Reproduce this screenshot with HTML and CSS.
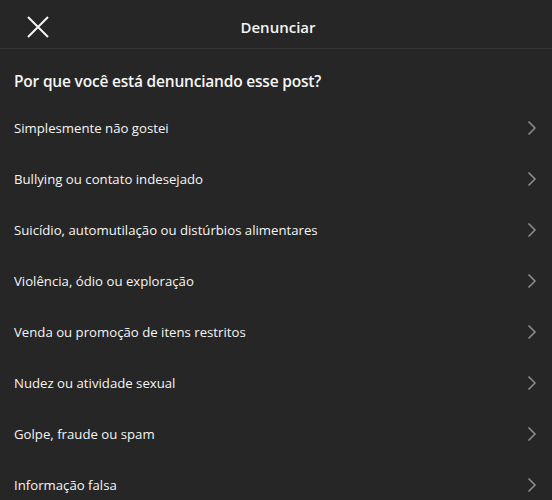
FILE: index.html
```html
<!DOCTYPE html>
<html lang="pt-BR">

<head>
    <meta charset="UTF-8">
    <meta name="viewport" content="width=device-width, initial-scale=1.0">
    <title>Denunciar</title>
    <link rel="stylesheet" href="styles.css">
</head>

<body>
    <div class="dialog">
        <header class="dialog-header">
            <button class="close-btn" aria-label="Fechar">
                <svg width="22" height="22" viewBox="0 0 22 22">
                    <path d="M1 1 L21 21 M21 1 L1 21" stroke="#f5f5f5" stroke-width="2" fill="none" />
                </svg>
            </button>
            <h1>Denunciar</h1>
        </header>
        <main>
            <h2 class="question">Por que você está denunciando esse post?</h2>
            <ul class="reasons">
                <li class="reason"><span>Simplesmente não gostei</span><svg class="chevron" viewBox="0 0 10 16"><path d="M1.5 1.5 L8 8 L1.5 14.5" /></svg></li>
                <li class="reason"><span>Bullying ou contato indesejado</span><svg class="chevron" viewBox="0 0 10 16"><path d="M1.5 1.5 L8 8 L1.5 14.5" /></svg></li>
                <li class="reason"><span>Suicídio, automutilação ou distúrbios alimentares</span><svg class="chevron" viewBox="0 0 10 16"><path d="M1.5 1.5 L8 8 L1.5 14.5" /></svg></li>
                <li class="reason"><span>Violência, ódio ou exploração</span><svg class="chevron" viewBox="0 0 10 16"><path d="M1.5 1.5 L8 8 L1.5 14.5" /></svg></li>
                <li class="reason"><span>Venda ou promoção de itens restritos</span><svg class="chevron" viewBox="0 0 10 16"><path d="M1.5 1.5 L8 8 L1.5 14.5" /></svg></li>
                <li class="reason"><span>Nudez ou atividade sexual</span><svg class="chevron" viewBox="0 0 10 16"><path d="M1.5 1.5 L8 8 L1.5 14.5" /></svg></li>
                <li class="reason"><span>Golpe, fraude ou spam</span><svg class="chevron" viewBox="0 0 10 16"><path d="M1.5 1.5 L8 8 L1.5 14.5" /></svg></li>
                <li class="reason"><span>Informação falsa</span><svg class="chevron" viewBox="0 0 10 16"><path d="M1.5 1.5 L8 8 L1.5 14.5" /></svg></li>
            </ul>
        </main>
    </div>
</body>

</html>
```

FILE: styles.css
```css
body {
    margin: 0;
    background: #262626;
    color: #f5f5f5;
    font-family: "Open Sans", "Noto Sans", sans-serif;
}

.dialog {
    width: 552px;
    height: 500px;
    overflow: hidden;
    background: #262626;
}

.dialog-header {
    height: 48px;
    border-bottom: 1px solid #363636;
    display: flex;
    align-items: center;
    justify-content: center;
    position: relative;
}

.close-btn {
    position: absolute;
    left: 27px;
    top: 16px;
    padding: 0;
    border: 0;
    background: none;
    width: 22px;
    height: 22px;
}

.dialog-header h1 {
    margin: 0;
    font-size: 15px;
    font-weight: 600;
    padding-left: 4px;
    padding-top: 6px;
}

.question {
    margin: 0;
    padding: 21px 14px 16px;
    font-size: 15.5px;
    font-weight: 600;
    letter-spacing: -0.2px;
    line-height: 22px;
}

.reasons {
    list-style: none;
    margin: 0;
    padding: 0;
}

.reason {
    height: 51px;
    display: flex;
    align-items: center;
    justify-content: space-between;
    padding: 0 14px;
    font-size: 13.2px;
    margin-top: -6px;
    margin-bottom: 6px;
}

.chevron {
    width: 10px;
    height: 16px;
    margin-right: 1px;
}

.chevron path {
    fill: none;
    stroke: #8e8e8e;
    stroke-width: 1.5;
}
```
